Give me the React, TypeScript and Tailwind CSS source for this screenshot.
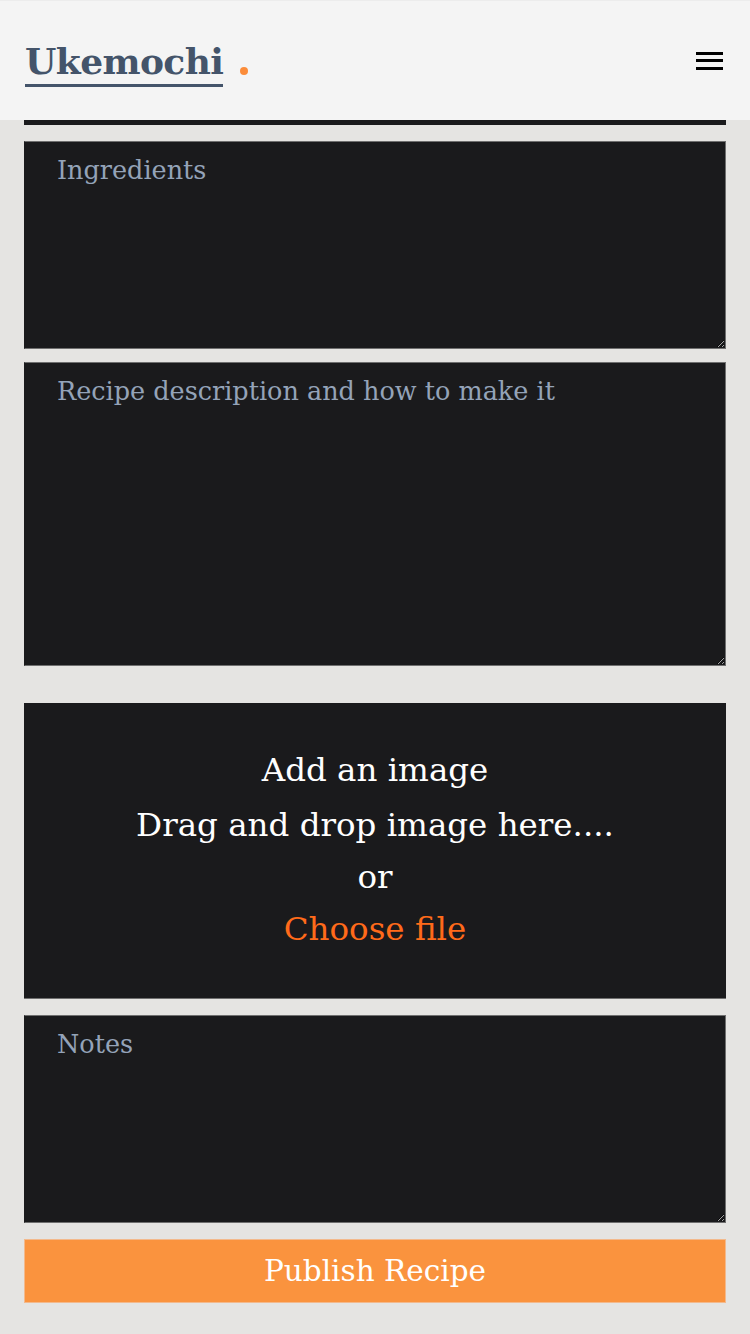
import React from 'react';

const serif = { fontFamily: '"DejaVu Serif", "Liberation Serif", serif' };

const Header: React.FC = () => (
  <header className="sticky top-0 z-10 h-[120px] bg-[#f4f4f4] border-t border-[#ececec] flex items-center justify-between px-[25px]">
    <a href="#" className="flex items-end gap-[17px] text-[#44546a] no-underline mt-[8px]">
      <span className="text-[36px] leading-none font-bold border-b-[3px] border-[#44546a] pb-[5px] tracking-[-0.6px]">
        Ukemochi
      </span>
      <span className="w-[8px] h-[8px] rounded-full bg-[#fb8c3a] mb-[12px]" />
    </a>
    <button aria-label="Menu" className="w-[27px] h-[20px] flex flex-col justify-between py-[1px] mr-[2px]">
      <span className="block h-[3px] w-full bg-black" />
      <span className="block h-[3px] w-full bg-black" />
      <span className="block h-[3px] w-full bg-black" />
    </button>
  </header>
);

const Field: React.FC<{ placeholder: string; h: string }> = ({ placeholder, h }) => (
  <textarea
    placeholder={placeholder}
    className={`block w-full ${h} bg-[#1a1a1c] border border-[#6f6f6f] border-l-[#1a1a1c] px-8 py-[10px] text-[25.5px] leading-[1.45] text-white placeholder:text-[#94a3b8] outline-none`}
    style={serif}
  />
);

export default function App() {
  return (
    <div className="min-h-[1334px] bg-[#e5e4e2]" style={serif}>
      <Header />
      <main className="px-6 pb-8">
        <div className="h-[5px] bg-[#1a1a1c]" />
        <form className="flex flex-col mt-[16px]">
          <Field placeholder="Ingredients" h="h-[208px]" />
          <div className="mt-[13px]">
            <Field placeholder="Recipe description and how to make it" h="h-[304px]" />
          </div>

          <div className="mt-[37px] h-[296px] bg-[#1a1a1c] border-b border-[#6f6f6f] flex flex-col items-center justify-center text-white text-[32.5px] pb-[4px]">
            <p className="leading-[56px]">Add an image</p>
            <p className="leading-[54px]">Drag and drop image here....</p>
            <p className="leading-[50px]">or</p>
            <label className="leading-[54px] text-[#ff6a1a] cursor-pointer">
              Choose file
              <input type="file" className="hidden" />
            </label>
          </div>

          <div className="mt-[16px]">
            <Field placeholder="Notes" h="h-[208px]" />
          </div>

          <button
            type="button"
            className="mt-[16px] h-[64px] bg-[#fa933e] border border-[#f3b98c] text-white text-[29.5px]"
            style={serif}
          >
            Publish Recipe
          </button>
        </form>
      </main>
    </div>
  );
}
